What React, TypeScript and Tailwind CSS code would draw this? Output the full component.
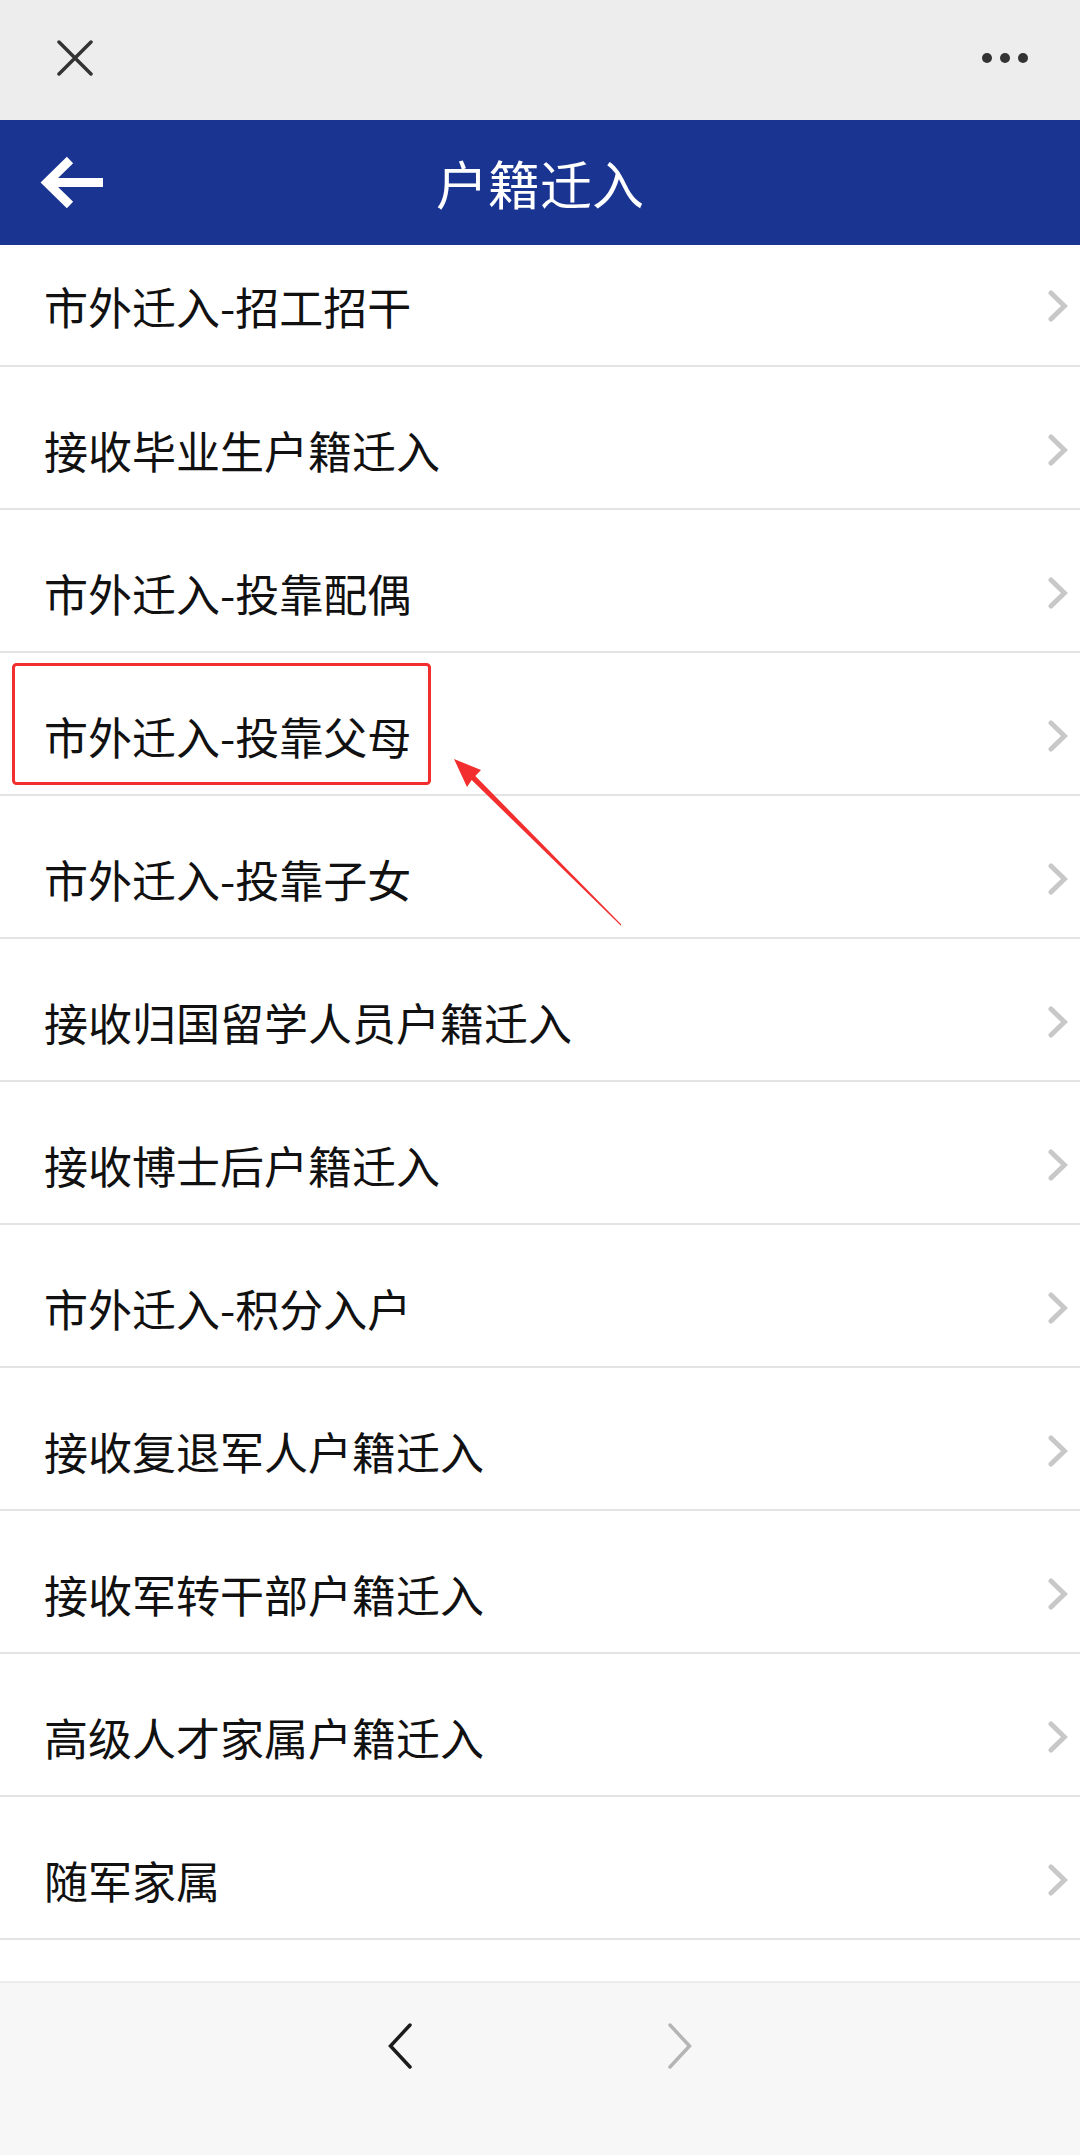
import React from 'react'

const items = [
  '市外迁入-招工招干',
  '接收毕业生户籍迁入',
  '市外迁入-投靠配偶',
  '市外迁入-投靠父母',
  '市外迁入-投靠子女',
  '接收归国留学人员户籍迁入',
  '接收博士后户籍迁入',
  '市外迁入-积分入户',
  '接收复退军人户籍迁入',
  '接收军转干部户籍迁入',
  '高级人才家属户籍迁入',
  '随军家属',
]

function Chevron() {
  return (
    <svg width="20" height="32" viewBox="0 0 20 32" className="shrink-0">
      <polyline
        points="3,3 16.5,16 3,29"
        fill="none"
        stroke="#c8c8c8"
        strokeWidth="5"
        strokeLinecap="round"
        strokeLinejoin="miter"
      />
    </svg>
  )
}

export default function App() {
  return (
    <div
      className="relative flex h-[2155px] w-[1080px] flex-col overflow-hidden bg-white"
      style={{ fontFamily: '"Noto Sans CJK SC", "Noto Sans", sans-serif' }}
    >
      {/* top bar */}
      <div className="flex h-[120px] shrink-0 items-center justify-between bg-[#ededed] pb-[4px] pl-[57px] pr-[52px]">
        <svg width="36" height="36" viewBox="0 0 36 36">
          <path d="M2 2 L34 34 M34 2 L2 34" stroke="#333" strokeWidth="3.5" strokeLinecap="round" />
        </svg>
        <svg width="46" height="10" viewBox="0 0 46 10">
          <circle cx="5" cy="5" r="5" fill="#333" />
          <circle cx="23" cy="5" r="5" fill="#333" />
          <circle cx="41" cy="5" r="5" fill="#333" />
        </svg>
      </div>

      {/* header */}
      <div className="grid h-[125px] shrink-0 grid-cols-[1fr_auto_1fr] items-center bg-[#1a3591]">
        <div className="pl-[39px]">
          <svg width="64" height="56" viewBox="0 0 64 56">
            <path
              d="M31 5 L8 27.5 L31 50 M8 27.5 H64"
              fill="none"
              stroke="#fff"
              strokeWidth="9"
              strokeLinejoin="miter"
            />
          </svg>
        </div>
        <h1 className="text-[52px] leading-none text-white">户籍迁入</h1>
        <div />
      </div>

      {/* list */}
      <div className="flex flex-col">
        {items.map((item, i) => (
          <div
            key={item}
            className={
              i === 0
                ? 'flex h-[122px] items-center justify-between border-b-2 border-[#e4e4e4] pl-[44px] pr-[12px] pt-[2px]'
                : 'flex h-[143px] items-center justify-between border-b-2 border-[#e4e4e4] pl-[44px] pr-[12px] pt-[24px]'
            }
          >
            <span className="text-[44px] leading-none text-[#111]">{item}</span>
            <Chevron />
          </div>
        ))}
      </div>

      <div className="flex-1" />

      {/* bottom nav */}
      <div className="flex h-[174px] shrink-0 items-start justify-center gap-[256px] border-t-2 border-[#ececec] bg-[#f7f7f7] pt-[40px]">
        <svg width="24" height="46" viewBox="0 0 24 46">
          <polyline points="22,2 2.5,23 22,44" fill="none" stroke="#1c1c1c" strokeWidth="3.5" strokeLinecap="round" />
        </svg>
        <svg width="24" height="46" viewBox="0 0 24 46">
          <polyline points="2,2 21.5,23 2,44" fill="none" stroke="#b5b5b5" strokeWidth="3.5" strokeLinecap="round" />
        </svg>
      </div>

      {/* annotation overlay */}
      <svg
        className="pointer-events-none absolute left-0 top-0"
        width="1080"
        height="2155"
        viewBox="0 0 1080 2155"
      >
        <rect x="13.5" y="664.5" width="416" height="119" rx="3" fill="none" stroke="#f22e2e" strokeWidth="3" />
        <polygon
          points="454,759 481,770 475.3,776 621.35,924.6 620.65,925.4 471.7,780 467,787"
          fill="#f22e2e"
        />
      </svg>
    </div>
  )
}
